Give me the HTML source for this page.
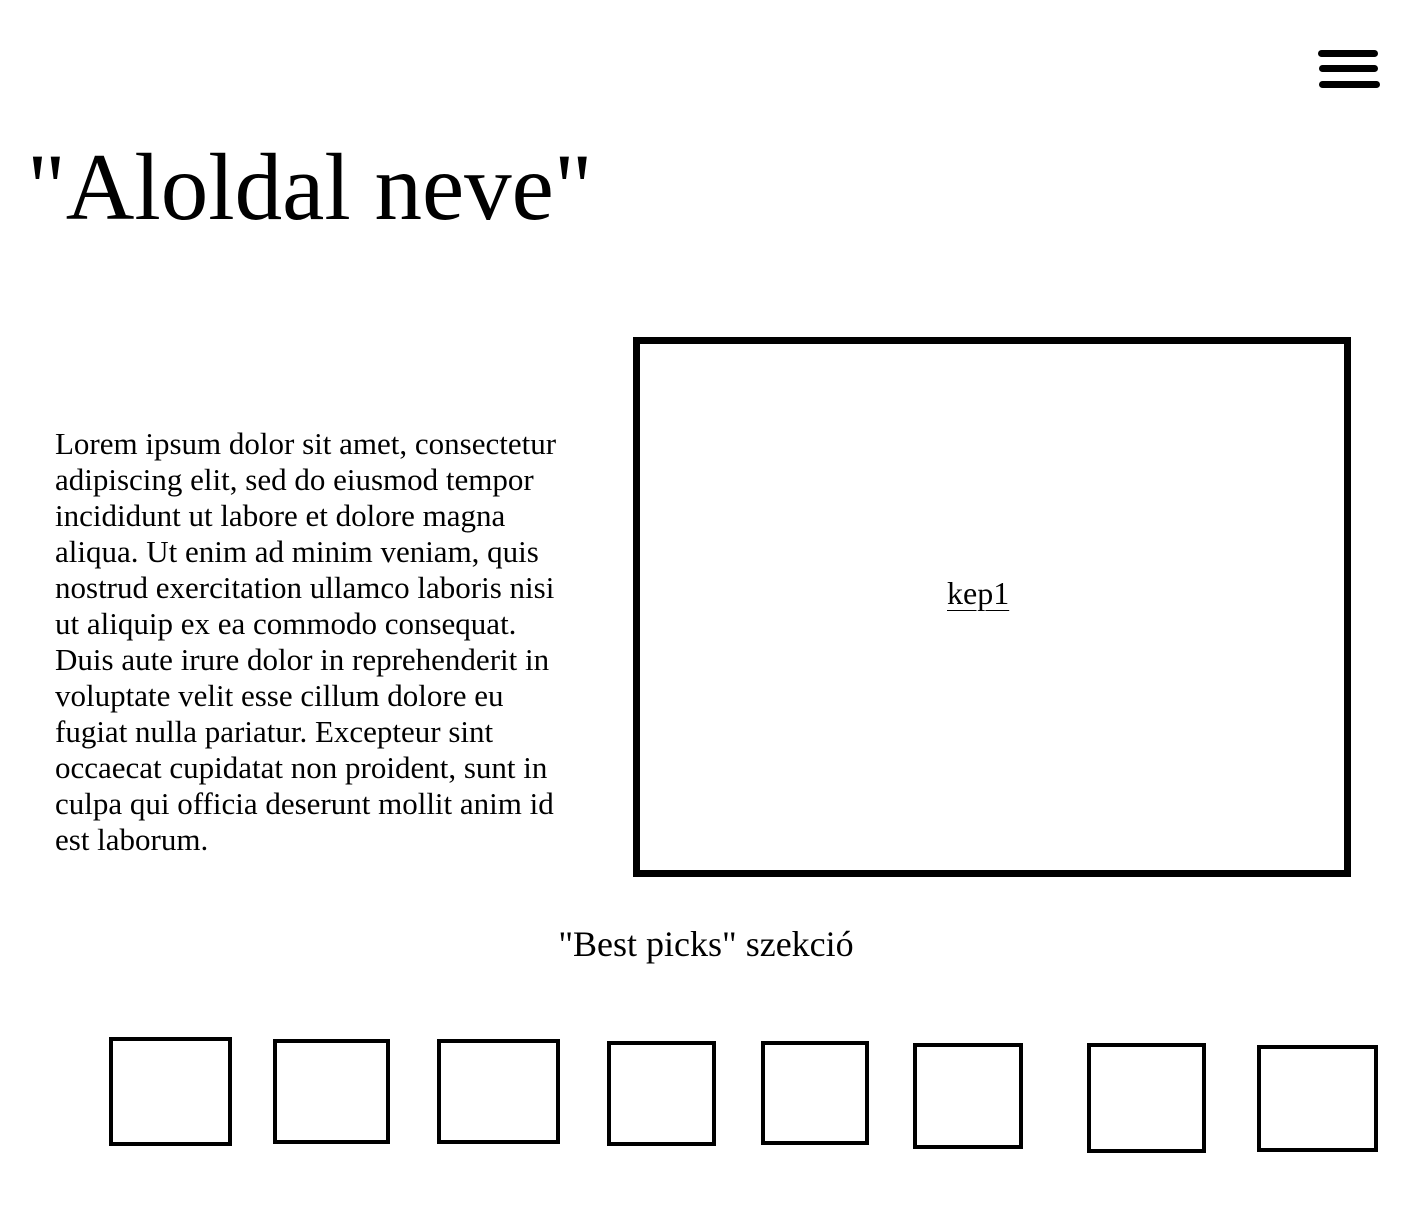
<!DOCTYPE html>
<html><head><style>
body{margin:0;width:1412px;height:1212px;background:#fff;font-family:"Liberation Serif",serif;color:#000;position:relative;overflow:hidden}
.b{position:absolute;background:#000;border-radius:4px;height:7px}
h1{position:absolute;left:27px;top:132px;margin:0;font-weight:normal;font-size:95px;line-height:110px;white-space:nowrap}
p{position:absolute;left:55px;top:426px;width:512px;margin:0;font-size:31px;line-height:36px}
.big{position:absolute;left:633px;top:337px;width:704px;height:526px;border:7px solid #000}
.kep{position:absolute;left:947px;top:575px;font-size:32px;text-decoration:underline;text-underline-offset:6px;text-decoration-thickness:1px}
.bp{position:absolute;left:0;width:1412px;text-align:center;top:923px;font-size:36px}
.s{position:absolute;border:4.5px solid #000;box-sizing:border-box}
</style></head><body>
<div class="b" style="left:1318px;top:50px;width:60px"></div>
<div class="b" style="left:1319px;top:65px;width:59px"></div>
<div class="b" style="left:1319px;top:81px;width:61px"></div>
<h1>"Aloldal neve"</h1>
<p>Lorem ipsum dolor sit amet, consectetur adipiscing elit, sed do eiusmod tempor incididunt ut labore et dolore magna aliqua. Ut enim ad minim veniam, quis nostrud exercitation ullamco laboris nisi ut aliquip ex ea commodo consequat. Duis aute irure dolor in reprehenderit in voluptate velit esse cillum dolore eu fugiat nulla pariatur. Excepteur sint occaecat cupidatat non proident, sunt in culpa qui officia deserunt mollit anim id est laborum.</p>
<div class="big"></div>
<div class="kep">kep1</div>
<div class="bp">"Best picks" szekció</div>
<div class="s" style="left:109px;top:1037px;width:123px;height:109px"></div>
<div class="s" style="left:273px;top:1039px;width:117px;height:105px"></div>
<div class="s" style="left:437px;top:1039px;width:123px;height:105px"></div>
<div class="s" style="left:607px;top:1041px;width:109px;height:105px"></div>
<div class="s" style="left:761px;top:1041px;width:108px;height:104px"></div>
<div class="s" style="left:913px;top:1043px;width:110px;height:106px"></div>
<div class="s" style="left:1087px;top:1043px;width:119px;height:110px"></div>
<div class="s" style="left:1257px;top:1045px;width:121px;height:107px"></div>
</body></html>
